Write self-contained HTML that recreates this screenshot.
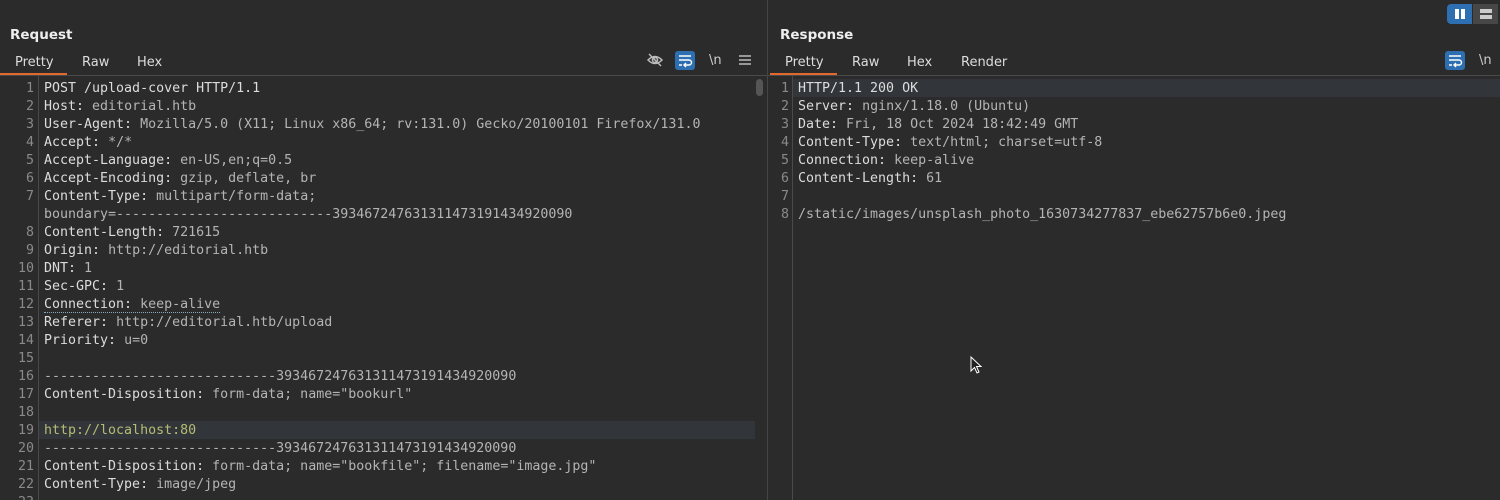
<!DOCTYPE html>
<html><head><meta charset="utf-8"><style>
*{margin:0;padding:0;box-sizing:border-box}
html,body{width:1500px;height:500px;overflow:hidden}
body{background:#2b2b2b;position:relative;font-family:"DejaVu Sans","Liberation Sans",sans-serif;color:#e2e2e2}
.abs{position:absolute}
.title{font-weight:bold;font-size:13.5px;color:#eee}
.tab{font-size:13px;color:#ddd;top:55px}
.ul{height:2px;background:#e2692d;top:73px}
.hline{height:1px;background:#4a4a4a;top:75px}
.code{font-family:"DejaVu Sans Mono","Liberation Mono",monospace;font-size:13.3px;line-height:18px;white-space:pre}
.ln{color:#8a8a8a;text-align:right}
.k{color:#dcdcdc}.v{color:#b4b4b4}.g{color:#b6bd72}
.hl{background:#32353a;height:18px}
</style></head><body>
<div class="abs" style="left:767px;top:0;width:1px;height:500px;background:#454545"></div>
<div class="abs" style="left:1447px;top:4px;width:25px;height:20px;background:#2d6fb0;border-radius:4px 0 0 4px"></div>
<div class="abs" style="left:1455px;top:9px;width:4px;height:10px;background:#fff"></div>
<div class="abs" style="left:1461px;top:9px;width:4px;height:10px;background:#fff"></div>
<div class="abs" style="left:1473px;top:4px;width:25px;height:20px;background:#474747"></div>
<div class="abs" style="left:1480px;top:9px;width:12px;height:4px;background:#ccc"></div>
<div class="abs" style="left:1480px;top:15px;width:12px;height:4px;background:#ccc"></div>

<div class="abs title" style="left:10px;top:27px">Request</div>
<div class="abs title" style="left:780px;top:27px">Response</div>
<div class="abs tab" style="left:15px">Pretty</div>
<div class="abs tab" style="left:82px">Raw</div>
<div class="abs tab" style="left:137px">Hex</div>
<div class="abs tab" style="left:785px">Pretty</div>
<div class="abs tab" style="left:852px">Raw</div>
<div class="abs tab" style="left:907px">Hex</div>
<div class="abs tab" style="left:961px">Render</div>
<div class="abs ul" style="left:0;width:67px"></div>
<div class="abs ul" style="left:770px;width:67px"></div>
<div class="abs hline" style="left:0;width:767px"></div>
<div class="abs hline" style="left:768px;width:732px"></div>

<svg class="abs" style="left:646px;top:52px" width="18" height="16" viewBox="0 0 18 16"><path d="M2 8 Q9 1 16 8 Q9 15 2 8Z" fill="none" stroke="#bbb" stroke-width="1.5"/><circle cx="9" cy="8" r="2.5" fill="none" stroke="#bbb" stroke-width="1.5"/><path d="M3 2 L15 14" stroke="#bbb" stroke-width="1.5"/></svg>
<div class="abs" style="left:675px;top:51px;width:20px;height:19px;background:#2d6fb0;border-radius:3px"></div>
<svg class="abs" style="left:675px;top:51px" width="20" height="19" viewBox="0 0 20 19"><path d="M4 5h12M4 9h10a2.5 2.5 0 0 1 0 5h-4M11 12l-2 2 2 2M4 14h3" fill="none" stroke="#fff" stroke-width="1.4"/></svg>
<div class="abs" style="left:709px;top:53px;font-size:13px;color:#ccc">\n</div>
<svg class="abs" style="left:739px;top:54px" width="12" height="12"><path d="M0 2h12M0 6h12M0 10h12" stroke="#bbb" stroke-width="1.6"/></svg>
<div class="abs" style="left:1445px;top:51px;width:20px;height:19px;background:#2d6fb0;border-radius:3px"></div>
<svg class="abs" style="left:1445px;top:51px" width="20" height="19" viewBox="0 0 20 19"><path d="M4 5h12M4 9h10a2.5 2.5 0 0 1 0 5h-4M11 12l-2 2 2 2M4 14h3" fill="none" stroke="#fff" stroke-width="1.4"/></svg>
<div class="abs" style="left:1479px;top:53px;font-size:13px;color:#ccc">\n</div>

<div class="abs" style="left:38px;top:76px;width:1px;height:424px;background:#4a4a4a"></div>
<div class="abs" style="left:792px;top:76px;width:1px;height:424px;background:#4a4a4a"></div>
<div class="abs hl" style="left:39px;top:421px;width:716px"></div>
<div class="abs hl" style="left:793px;top:79px;width:707px"></div>
<div class="abs" style="left:756px;top:79px;width:7px;height:17px;background:#555;border-radius:4px"></div>

<div class="abs code ln" style="left:0;top:80px;width:34px">1
2
3
4
5
6
7

8
9
10
11
12
13
14
15
16
17
18
19
20
21
22
23</div>
<div class="abs code" style="left:44px;top:80px"><span class="k">POST /upload-cover HTTP/1.1</span>
<span class="k">Host:</span> <span class="v">editorial.htb</span>
<span class="k">User-Agent:</span> <span class="v">Mozilla/5.0 (X11; Linux x86_64; rv:131.0) Gecko/20100101 Firefox/131.0</span>
<span class="k">Accept:</span> <span class="v">*/*</span>
<span class="k">Accept-Language:</span> <span class="v">en-US,en;q=0.5</span>
<span class="k">Accept-Encoding:</span> <span class="v">gzip, deflate, br</span>
<span class="k">Content-Type:</span> <span class="v">multipart/form-data;</span>
<span class="v">boundary=---------------------------393467247631311473191434920090</span>
<span class="k">Content-Length:</span> <span class="v">721615</span>
<span class="k">Origin:</span> <span class="v">http://editorial.htb</span>
<span class="k">DNT:</span> <span class="v">1</span>
<span class="k">Sec-GPC:</span> <span class="v">1</span>
<span class="k" style="border-bottom:1px dotted #8ab">Connection: <span class="v">keep-alive</span></span>
<span class="k">Referer:</span> <span class="v">http://editorial.htb/upload</span>
<span class="k">Priority:</span> <span class="v">u=0</span>

<span class="v">-----------------------------393467247631311473191434920090</span>
<span class="k">Content-Disposition:</span> <span class="v">form-data; name="bookurl"</span>

<span class="g">http://localhost:80</span>
<span class="v">-----------------------------393467247631311473191434920090</span>
<span class="k">Content-Disposition:</span> <span class="v">form-data; name="bookfile"; filename="image.jpg"</span>
<span class="k">Content-Type:</span> <span class="v">image/jpeg</span></div>

<div class="abs code ln" style="left:768px;top:80px;width:21px">1
2
3
4
5
6
7
8</div>
<div class="abs code" style="left:798px;top:80px"><span class="k">HTTP/1.1 200 OK</span>
<span class="k">Server:</span> <span class="v">nginx/1.18.0 (Ubuntu)</span>
<span class="k">Date:</span> <span class="v">Fri, 18 Oct 2024 18:42:49 GMT</span>
<span class="k">Content-Type:</span> <span class="v">text/html; charset=utf-8</span>
<span class="k">Connection:</span> <span class="v">keep-alive</span>
<span class="k">Content-Length:</span> <span class="v">61</span>

<span class="v">/static/images/unsplash_photo_1630734277837_ebe62757b6e0.jpeg</span></div>

<svg class="abs" style="left:970px;top:356px" width="14" height="20" viewBox="0 0 14 20"><path d="M1 1 L1 15 L4.5 11.5 L7 17 L9 16 L6.5 10.5 L11 10.5 Z" fill="#222" stroke="#fff" stroke-width="1"/></svg>
</body></html>
